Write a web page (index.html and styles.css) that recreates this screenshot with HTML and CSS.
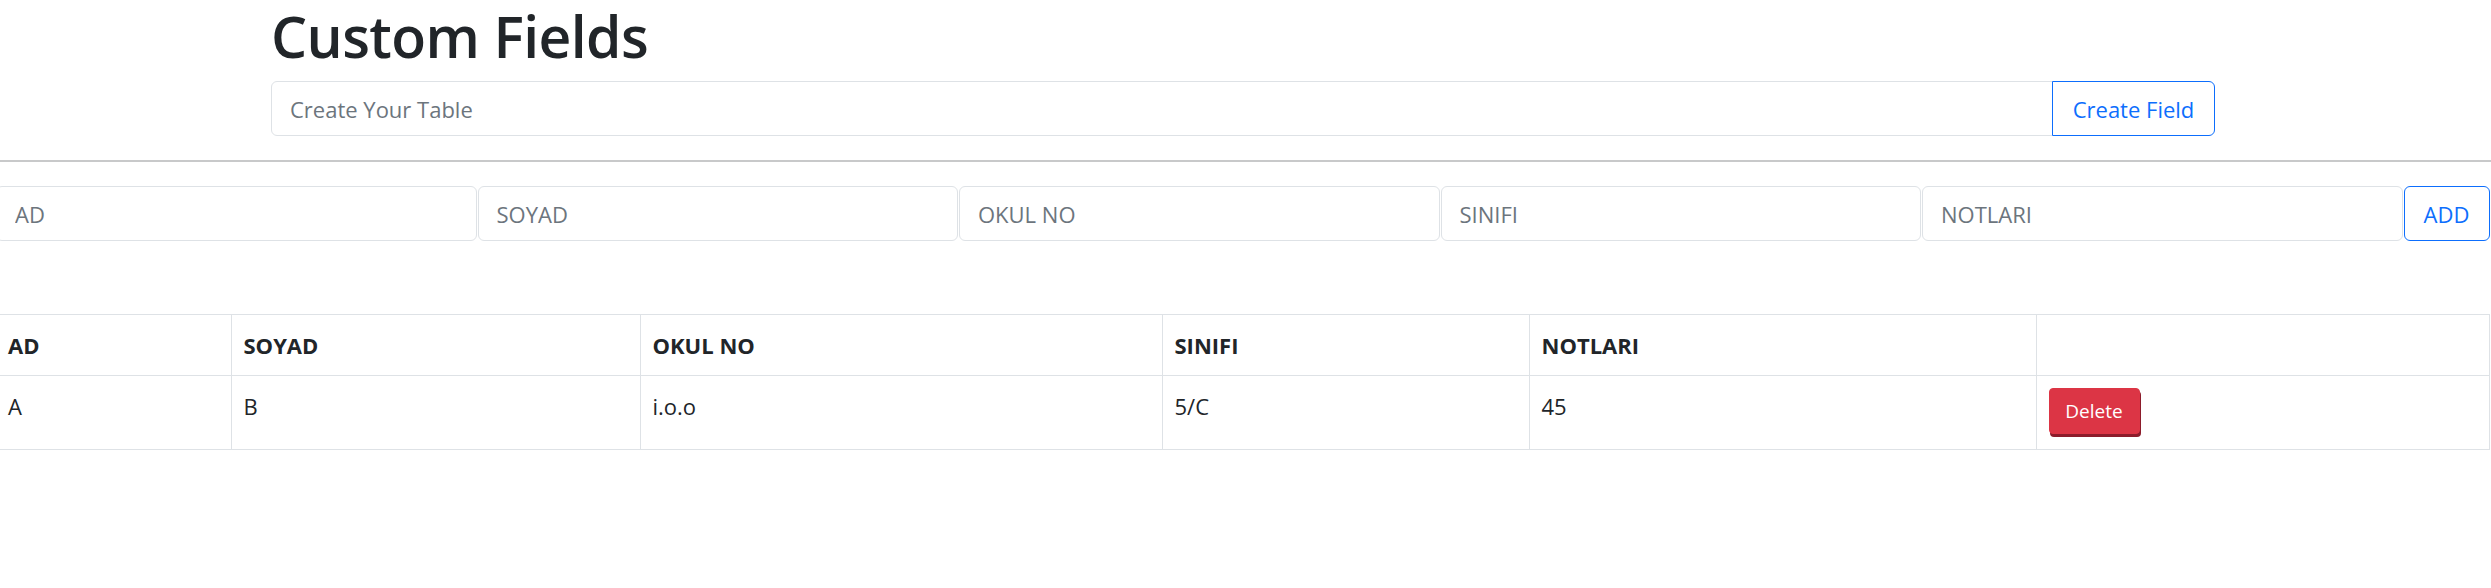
FILE: index.html
```html
<!DOCTYPE html>
<html lang="tr">
<head>
<meta charset="utf-8">
<title>Custom Fields</title>
<link rel="stylesheet" href="styles.css">
</head>
<body>
<div class="container">
  <h1 class="title">Custom Fields</h1>
  <div class="create-group">
    <input class="field create-input" type="text" placeholder="Create Your Table">
    <button class="btn btn-outline create-btn" type="button">Create Field</button>
  </div>
</div>
<hr class="divider">
<div class="main">
  <div class="entry-row">
    <input class="field entry" type="text" placeholder="AD">
    <input class="field entry" type="text" placeholder="SOYAD">
    <input class="field entry" type="text" placeholder="OKUL NO">
    <input class="field entry" type="text" placeholder="SINIFI">
    <input class="field entry" type="text" placeholder="NOTLARI">
    <button class="btn btn-outline add-btn" type="button">ADD</button>
  </div>
  <table class="data-table">
    <colgroup>
      <col class="c1"><col class="c2"><col class="c3"><col class="c4"><col class="c5"><col class="c6">
    </colgroup>
    <thead>
      <tr><th>AD</th><th>SOYAD</th><th>OKUL NO</th><th>SINIFI</th><th>NOTLARI</th><th></th></tr>
    </thead>
    <tbody>
      <tr><td>A</td><td>B</td><td>i.o.o</td><td>5/C</td><td>45</td><td><button class="btn btn-danger" type="button">Delete</button></td></tr>
    </tbody>
  </table>
</div>
</body>
</html>
```
FILE: styles.css
```css
* { box-sizing: border-box; }
html, body { margin: 0; padding: 0; }
body {
  font-family: "Open Sans", "Noto Sans", "Liberation Sans", sans-serif;
  font-size: 24px;
  line-height: 1.5;
  color: #212529;
  background: #fff;
}
.container {
  width: 1944px;
  margin-left: 271px;
}
.title {
  margin: 0 0 9px 0;
  font-size: 57px;
  font-weight: 600;
  line-height: 72px;
  letter-spacing: -0.6px;
}
.create-group {
  display: flex;
}
.field {
  font: inherit;
  font-size: 22px;
  color: #212529;
  background: #fff;
  border: 1px solid #dee2e6;
  border-radius: 6px;
  padding: 8px 18px;
  height: 55px;
  line-height: 36px;
  outline: none;
}
.field::placeholder { color: #6c757d; opacity: 1; }
.create-input {
  flex: 1;
  border-top-right-radius: 0;
  border-bottom-right-radius: 0;
}
.btn {
  font: inherit;
  font-size: 22px;
  line-height: 36px;
  padding: 8px 17px;
  border: 1px solid transparent;
  border-radius: 6px;
  cursor: pointer;
  background: transparent;
}
.btn-outline {
  color: #0d6efd;
  border-color: #0d6efd;
  background: #fff;
}
.create-btn {
  width: 163px;
  height: 55px;
  padding: 0;
  margin-left: -1px;
  border-top-left-radius: 0;
  border-bottom-left-radius: 0;
}
.divider {
  margin: 24px 0;
  border: 0;
  border-top: 2px solid #c8c9ca;
  height: 0;
}
.main {
  margin-left: -4px;
  width: 2494px;
}
.entry-row {
  display: flex;
  gap: 1px;
}
.entry {
  width: 480.5px;
  flex: none;
}
.add-btn {
  width: 86px;
  height: 55px;
  padding: 0;
  flex: none;
}
.data-table {
  margin-top: 73px;
  width: 100%;
  border-collapse: collapse;
  table-layout: fixed;
}
.c1 { width: 235px; }
.c2 { width: 409px; }
.c3 { width: 522px; }
.c4 { width: 367px; }
.c5 { width: 507px; }
.c6 { width: auto; }
.data-table th,
.data-table td {
  border: 1px solid #dee2e6;
  padding: 12px;
  text-align: left;
  vertical-align: top;
  font-size: 22px;
  line-height: 36px;
}
.data-table th { font-weight: 700; }
.data-table tr > :first-child { border-left: 0; }
.btn-danger {
  background: #dc3545;
  color: #fff;
  font-size: 19px;
  line-height: 30px;
  padding: 6px 12px 7px;
  border: 1px solid #dc3545;
  border-radius: 4px;
  box-shadow: 1px 3px 0 #8c1c2b;
  width: 91px;
  height: 46px;
  margin-bottom: 3px;
}
```
